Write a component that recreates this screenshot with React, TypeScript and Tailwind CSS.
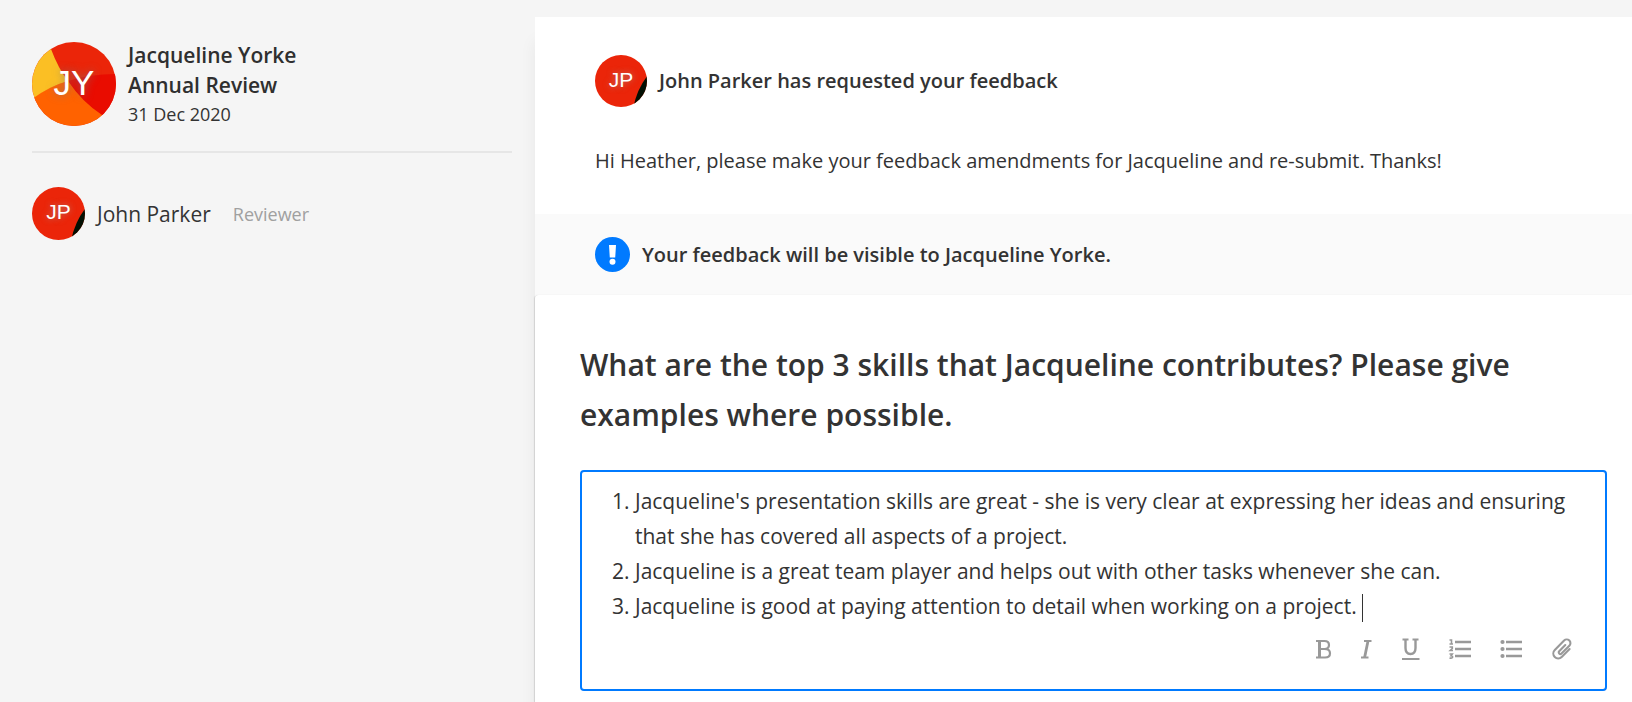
import { useId } from "react";
import type { ReactNode } from "react";

function JohnAvatar({ className }: { className: string }) {
  const clip = useId();
  return (
    <span className={`relative grid shrink-0 place-items-center pb-1 ${className}`}>
      <svg viewBox="0 0 52 52" className="absolute inset-0 size-full" aria-hidden="true">
        <clipPath id={clip}>
          <circle cx="26" cy="26" r="26" />
        </clipPath>
        <g clipPath={`url(#${clip})`}>
          <rect width="52" height="52" fill="#eb2509" />
          <path d="M53 20 Q42 34 38.500 52 H53 Z" fill="#031003" />
        </g>
      </svg>
      <span className="relative font-['Liberation_Sans',sans-serif] text-[21px] leading-none text-white [text-shadow:0_0_6px_rgba(160,160,160,0.7)]">
        JP
      </span>
    </span>
  );
}

function JacquelineAvatar() {
  const clip = useId();
  return (
    <span className="relative grid size-21 shrink-0 place-items-center pb-1">
      <svg viewBox="0 0 84 84" className="absolute inset-0 size-full" aria-hidden="true">
        <clipPath id={clip}>
          <circle cx="42" cy="42" r="42" />
        </clipPath>
        <g clipPath={`url(#${clip})`}>
          <rect width="84" height="84" fill="#eb2509" />
          <path d="M36 39 Q58 32 84 32 V84 L70 73 Q50 60 36 39 Z" fill="#e90c00" />
          <path d="M0 56 Q18 44 36 39 Q50 60 70 73 L84 84 H0 Z" fill="#ff6200" />
          <path d="M0 57 Q18 44 36 39 Q26 26 19 7 L12 0 H0 Z" fill="#fbbf24" />
        </g>
      </svg>
      <span className="relative font-['Liberation_Sans',sans-serif] text-[35px] leading-none text-white [text-shadow:0_0_8px_rgba(120,120,120,0.8)]">
        JY
      </span>
    </span>
  );
}

function ToolButton({ label, children }: { label: string; children: ReactNode }) {
  return (
    <button type="button" aria-label={label} className="grid place-items-center text-[#999999]">
      {children}
    </button>
  );
}

const answers = [
  "Jacqueline's presentation skills are great - she is very clear at expressing her ideas and ensuring that she has covered all aspects of a project.",
  "Jacqueline is a great team player and helps out with other tasks whenever she can.",
];

export default function App() {
  return (
    <div className="flex min-h-screen bg-[#f5f5f5] pt-[17px] font-['Open_Sans',sans-serif] text-[#333333]">
      <aside className="w-[535px] shrink-0 pt-[25px] pr-[23px] pl-8">
        <div className="flex gap-3 border-b-2 border-[#e6e6e6] pb-[25px]">
          <JacquelineAvatar />
          <div className="-my-0.5">
            <h2 className="text-[21px] leading-[30px] font-semibold text-[#2f2f2f]">
              Jacqueline Yorke
              <br />
              Annual Review
            </h2>
            <p className="text-[18px] leading-7">31 Dec 2020</p>
          </div>
        </div>
        <div className="flex items-center pt-[34px]">
          <JohnAvatar className="size-[53px]" />
          <span className="ml-3 text-[21px] leading-7">John Parker</span>
          <span className="ml-[22px] text-[18px] leading-7 text-[#a0a0a0]">Reviewer</span>
        </div>
      </aside>

      <main className="flex min-w-0 flex-1 flex-col bg-white shadow-[0_24px_16px_rgba(0,0,0,0.06)]">
        <section className="px-15 pt-[38px] pb-[39px]">
          <div className="flex items-center gap-3">
            <JohnAvatar className="size-[52px]" />
            <h1 className="text-[20px] leading-7 font-semibold">
              John Parker has requested your feedback
            </h1>
          </div>
          <p className="mt-10 text-[20px] leading-7">
            Hi Heather, please make your feedback amendments for Jacqueline and re-submit. Thanks!
          </p>
        </section>

        <section className="flex items-center gap-3 bg-[#fafafa] px-15 py-[23px]">
          <svg viewBox="0 0 35 35" className="size-[35px]" aria-hidden="true">
            <circle cx="17.500" cy="17.500" r="17.500" fill="#007aff" />
            <path d="M14 8 H21 L20.200 20.500 H14.800 Z" fill="#fff" />
            <circle cx="17.500" cy="24.800" r="3" fill="#fff" />
          </svg>
          <p className="text-[20px] leading-7 font-semibold">
            Your feedback will be visible to Jacqueline Yorke.
          </p>
        </section>

        <section className="flex-1 rounded-tl-sm px-[45px] pt-[45px] pr-[25px] shadow-[-1px_0_1px_rgba(0,0,0,0.12)]">
          <h2 id="question" className="text-[30px] leading-[50px] font-semibold">
            What are the top 3 skills that Jacqueline contributes? Please give examples where possible.
          </h2>
          <div className="mt-[30px] rounded-sm border-2 border-[#007aff] pt-3 pb-[28px]">
            <div
              role="textbox"
              aria-multiline="true"
              aria-labelledby="question"
              contentEditable
              suppressContentEditableWarning
              className="pr-8 pl-[53px] outline-none"
            >
              <ol className="list-decimal text-[21px] leading-[35px]">
                {answers.map((answer) => (
                  <li key={answer}>{answer}</li>
                ))}
                <li>
                  Jacqueline is good at paying attention to detail when working on a project.{" "}
                  <span className="inline-block h-7 w-px bg-[#333333] align-middle" />
                </li>
              </ol>
            </div>
            <div className="mt-[13px] flex items-center justify-end gap-[27px] pr-[31px]" role="toolbar" aria-label="Formatting">
              <ToolButton label="Bold">
                <svg width="18" height="24" viewBox="0 0 18 24" fill="none" stroke="currentColor">
                  <path d="M1 4 H9.500 Q14 4 14 8 Q14 12 9.500 12 H4.500 M9.500 12 Q15 12 15 16.200 Q15 20.500 10 20.500 H1" strokeWidth="2.200" />
                  <path d="M4.500 4 V20.500" strokeWidth="3" />
                </svg>
              </ToolButton>
              <ToolButton label="Italic">
                <svg width="14" height="24" viewBox="0 0 14 24" fill="none" stroke="currentColor" strokeWidth="2">
                  <path d="M4 4 H11.500 M1 20.500 H8.500" />
                  <path d="M8 4 L4.600 20.500" strokeWidth="2.800" />
                </svg>
              </ToolButton>
              <ToolButton label="Underline">
                <svg width="20" height="24" viewBox="0 0 20 24" fill="none" stroke="currentColor" strokeWidth="2">
                  <path d="M1.500 2.500 H7.500 M11.500 2.500 H17.500 M1 22 H18.500" />
                  <path d="M4.500 2.500 V11 Q4.500 17 9.500 17 Q14.500 17 14.500 11 V2.500" strokeWidth="2.400" />
                </svg>
              </ToolButton>
              <ToolButton label="Numbered list">
                <svg width="24" height="24" viewBox="0 0 24 24" fill="none" stroke="currentColor">
                  <path d="M7 5 H23 M7 12 H23 M7 19 H23" strokeWidth="2.600" />
                  <path d="M1.500 3 H3.500 V7 M1.500 7 H5 M1.500 10 H4.300 V11.500 L2.200 13.500 H5 M1.500 17 H4.300 L3 18.800 Q5 19 4.500 20.500 Q3.500 21.500 1.500 21" strokeWidth="1.600" />
                </svg>
              </ToolButton>
              <ToolButton label="Bulleted list">
                <svg width="24" height="24" viewBox="0 0 24 24" fill="none" stroke="currentColor" strokeWidth="2.600">
                  <path d="M7 5 H23 M7 12 H23 M7 19 H23" />
                  <g fill="currentColor" stroke="none">
                    <circle cx="3.500" cy="5" r="2.100" />
                    <circle cx="3.500" cy="12" r="2.100" />
                    <circle cx="3.500" cy="19" r="2.100" />
                  </g>
                </svg>
              </ToolButton>
              <ToolButton label="Attach file">
                <svg width="24" height="24" viewBox="0 0 24 24" fill="none" stroke="currentColor" strokeWidth="2.100" strokeLinecap="round" strokeLinejoin="round">
                  <path d="M15.300 8 L9.200 14.200 A1.600 1.600 0 0 0 11.500 16.500 L19.300 8.800 A3.700 3.700 0 0 0 14.100 3.500 L4.800 13 A4.900 4.900 0 0 0 11.700 20 L19.600 12" />
                </svg>
              </ToolButton>
            </div>
          </div>
        </section>
      </main>
    </div>
  );
}
